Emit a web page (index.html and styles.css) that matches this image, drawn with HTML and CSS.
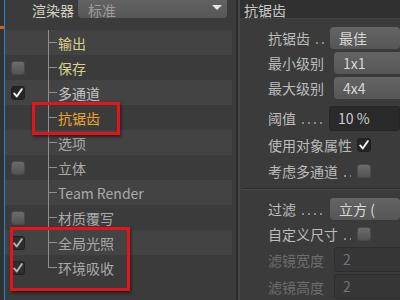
FILE: index.html
```html
<!DOCTYPE html>
<html lang="zh-CN">
<head>
    <meta charset="UTF-8">
    <title>渲染设置 - 抗锯齿</title>
    <link rel="stylesheet" href="styles.css">
</head>
<body>

<div class="app">
    <div class="edge"><span class="edge-mark"></span></div>

    <div class="tree-panel">
        <div class="renderer-row">
            <span class="renderer-label">渲染器</span>
            <div class="dropdown">标准<span class="arrow"></span></div>
        </div>
        <ul class="tree">
            <li class="item"><span class="cb-cell"></span><span class="branch"></span><span class="name name-yellow">输出</span></li>
            <li class="item"><span class="cb-cell"><span class="cb"></span></span><span class="branch"></span><span class="name name-yellow">保存</span></li>
            <li class="item"><span class="cb-cell"><span class="cb cb-on"><svg viewBox="0 0 14 14"><path d="M2.5 7.5 L5.5 11 L11.5 2.5"/></svg></span></span><span class="branch"></span><span class="name name-light">多通道</span></li>
            <li class="item"><span class="cb-cell"></span><span class="branch"></span><span class="name name-active">抗锯齿</span></li>
            <li class="item"><span class="cb-cell"></span><span class="branch"></span><span class="name">选项</span></li>
            <li class="item"><span class="cb-cell"><span class="cb"></span></span><span class="branch"></span><span class="name">立体</span></li>
            <li class="item"><span class="cb-cell"></span><span class="branch"></span><span class="name">Team Render</span></li>
            <li class="item"><span class="cb-cell"><span class="cb"></span></span><span class="branch"></span><span class="name">材质覆写</span></li>
            <li class="item"><span class="cb-cell"><span class="cb cb-on cb-dim"><svg viewBox="0 0 14 14"><path d="M2.5 7.5 L5.5 11 L11.5 2.5"/></svg></span></span><span class="branch"></span><span class="name">全局光照</span></li>
            <li class="item"><span class="cb-cell"><span class="cb cb-on cb-dim"><svg viewBox="0 0 14 14"><path d="M2.5 7.5 L5.5 11 L11.5 2.5"/></svg></span></span><span class="branch"></span><span class="name">环境吸收</span></li>
        </ul>
    </div>

    <div class="splitter"></div>

    <div class="props">
        <div class="props-head">抗锯齿</div>
        <div class="prop-list">
            <div class="prop"><span class="key">抗锯齿<span class="leader"></span></span><span class="btn">最佳</span></div>
            <div class="prop"><span class="key">最小级别<span class="leader"></span></span><span class="btn">1x1</span></div>
            <div class="prop"><span class="key">最大级别<span class="leader"></span></span><span class="btn">4x4</span></div>
            <div class="prop prop-field"><span class="key">阈值<span class="leader"></span></span><span class="field">10 %</span></div>
            <div class="prop roomy"><span class="key">使用对象属性</span><span class="cb cb-on"><svg viewBox="0 0 14 14"><path d="M2.5 7.5 L5.5 11 L11.5 2.5"/></svg></span></div>
            <div class="prop"><span class="key">考虑多通道<span class="leader"></span></span><span class="cb"></span></div>
            <div class="separator"></div>
            <div class="prop"><span class="key">过滤<span class="leader"></span></span><span class="btn">立方 (</span></div>
            <div class="prop"><span class="key">自定义尺寸<span class="leader"></span></span><span class="cb"></span></div>
            <div class="prop roomy off"><span class="key">滤镜宽度<span class="leader"></span></span><span class="field field-off">2</span></div>
            <div class="prop roomy off"><span class="key">滤镜高度<span class="leader"></span></span><span class="field field-off">2</span></div>
        </div>
    </div>

    <!-- red annotation boxes -->
    <div class="mark mark-aa"></div>
    <div class="mark mark-gi"></div>
</div>

</body>
</html>
```

FILE: styles.css
```css
body {
    margin: 0;
    background: #3b3b3b;
    font-family: "Noto Sans CJK SC", "Noto Sans", sans-serif;
    font-size: 14px;
    color: #b4b4b4;
}
.app {
    position: relative;
    display: flex;
    width: 400px;
    height: 300px;
    overflow: hidden;
    background: #3b3b3b;
}
/* left window edge */
.edge {
    width: 4px;
    background: #303336;
    border-right: 1px solid #2f7fd0;
    padding-top: 26px;
}
.edge-mark {
    display: block;
    height: 3px;
    background: #d2601e;
}
/* tree */
.tree-panel {
    width: 231px;
}
.renderer-row {
    display: flex;
    height: 30px;
}
.renderer-label {
    width: 46px;
    padding-left: 27px;
    line-height: 20px;
    color: #d2d0c0;
}
.dropdown {
    position: relative;
    width: 139px;
    height: 18px;
    padding-left: 10px;
    line-height: 20px;
    border-radius: 0 0 4px 4px;
    background: linear-gradient(#626262, #575757);
    color: #9c9c9c;
}
.arrow {
    position: absolute;
    right: 5px;
    top: 5px;
    border-left: 5px solid transparent;
    border-right: 5px solid transparent;
    border-top: 5px solid #e4e4e4;
}
.tree {
    list-style: none;
    margin: 0;
    padding: 0;
}
.item {
    display: flex;
    align-items: center;
    height: 25px;
    margin-right: 4px;
}
.item:nth-child(odd) {
    background: #434343;
}
.cb-cell {
    display: flex;
    align-items: center;
    width: 37px;
    padding-left: 6px;
    align-self: stretch;
}
.branch {
    display: flex;
    flex-direction: column;
    align-self: stretch;
    width: 9px;
}
.branch::before,
.branch::after {
    content: '';
    flex: 1;
    border-left: 1px solid #8e8e8e;
}
.branch::before {
    border-bottom: 1px solid #8e8e8e;
}
.item:last-child .branch::after {
    border-left-color: transparent;
}
.name {
    padding-left: 1px;
    color: #a9a9a9;
    white-space: nowrap;
}
.name-yellow {
    color: #d8ce8e;
}
.name-light {
    color: #c6c6c6;
}
.name-active {
    color: #eaa42c;
}
/* checkboxes */
.cb {
    display: block;
    width: 14px;
    height: 14px;
    box-sizing: border-box;
    border-radius: 3px;
    background: linear-gradient(#6c6c6c, #535353);
    border: 1px solid #4a4a4a;
}
.cb svg {
    display: block;
    width: 12px;
    height: 12px;
}
.cb svg path {
    fill: none;
    stroke: #f2f2f2;
    stroke-width: 2.2;
    stroke-linecap: round;
    stroke-linejoin: round;
}
.cb-on {
    background: #252525;
    border-color: #1f1f1f;
}
.cb-dim {
    background: #2e2e2e;
}
.cb-dim svg path {
    stroke: #b4b4b4;
}
/* divider between panels */
.splitter {
    width: 2px;
    background: #2b2b2b;
    border-right: 2px solid #464646;
}
/* attribute panel */
.props {
    flex: 1;
    min-width: 0;
}
.props-head {
    height: 18px;
    line-height: 20px;
    padding-left: 4px;
    background: #303030;
    border-bottom: 1px solid #444;
    color: #c8c8c8;
}
.prop-list {
    padding-top: 6px;
}
.prop {
    display: flex;
    align-items: center;
    height: 25px;
    padding-left: 28px;
    white-space: nowrap;
}
.prop-field {
    height: 26px;
    margin-top: 5px;
}
.roomy {
    height: 27px;
}
.key {
    display: flex;
    align-items: center;
    width: 89px;
    color: #bcbcbc;
}
.leader {
    flex: 1;
    height: 14px;
    margin: 0 6px 0 4px;
    background-image: radial-gradient(circle, #8a8a8a 0.9px, transparent 1.4px);
    background-size: 6px 4px;
    background-repeat: repeat-x;
    background-position: left bottom;
}
.off .key {
    color: #6e6e6e;
}
.btn {
    width: 61px;
    height: 22px;
    padding-left: 9px;
    line-height: 22px;
    border-radius: 4px;
    background: linear-gradient(#646464, #565656);
    color: #d8d8d8;
    flex-shrink: 0;
}
.field {
    width: 61px;
    height: 23px;
    padding-left: 8px;
    line-height: 23px;
    border-radius: 3px;
    background: #2a2a2a;
    border: 1px solid #262626;
    color: #cfcfcf;
    flex-shrink: 0;
}
.field-off {
    background: #363636;
    border-color: #2e2e2e;
    color: #6c7484;
}
.separator {
    margin: 5px 0 6px 2px;
    border-top: 1px solid #2c2c2c;
    border-bottom: 1px solid #474747;
}
/* red annotation boxes */
.mark {
    position: absolute;
    box-sizing: border-box;
    border: 3px solid #e4141a;
    box-shadow: 1px 2px 3px rgba(0, 0, 0, 0.5);
}
.mark-aa {
    left: 32px;
    top: 102px;
    width: 88px;
    height: 33px;
}
.mark-gi {
    left: 10px;
    top: 227px;
    width: 120px;
    height: 64px;
}
```
